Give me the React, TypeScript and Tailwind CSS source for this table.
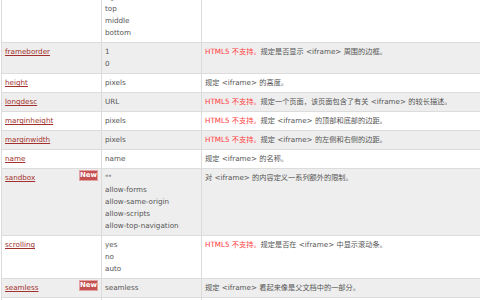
const rows = [
  {
    name: 'align',
    values: ['left', 'right', 'top', 'middle', 'bottom'],
    deprecated: true,
    desc: 'HTML 4.01 已废弃。根据周围的元素来对齐此元素。',
  },
  { name: 'frameborder', values: ['1', '0'], deprecated: true, desc: '规定是否显示 <iframe> 周围的边框。' },
  { name: 'height', values: ['pixels'], desc: '规定 <iframe> 的高度。' },
  { name: 'longdesc', values: ['URL'], deprecated: true, desc: '规定一个页面，该页面包含了有关 <iframe> 的较长描述。' },
  { name: 'marginheight', values: ['pixels'], deprecated: true, desc: '规定 <iframe> 的顶部和底部的边距。' },
  { name: 'marginwidth', values: ['pixels'], deprecated: true, desc: '规定 <iframe> 的左侧和右侧的边距。' },
  { name: 'name', values: ['name'], desc: '规定 <iframe> 的名称。' },
  {
    name: 'sandbox',
    isNew: true,
    values: ['""', 'allow-forms', 'allow-same-origin', 'allow-scripts', 'allow-top-navigation'],
    desc: '对 <iframe> 的内容定义一系列额外的限制。',
  },
  { name: 'scrolling', values: ['yes', 'no', 'auto'], deprecated: true, desc: '规定是否在 <iframe> 中显示滚动条。' },
  { name: 'seamless', isNew: true, values: ['seamless'], desc: '规定 <iframe> 看起来像是父文档中的一部分。' },
  { name: 'src', values: ['URL'], desc: '规定在 <iframe> 中显示的文档的 URL。' },
];

function NewBadge() {
  return (
    <span className="mt-[-2px] flex h-[11px] w-[19px] items-center justify-center border border-[#e3a3a3] bg-[#c4514f] text-[7px] leading-none font-bold text-white">
      New
    </span>
  );
}

export default function App() {
  return (
    <div className="h-[300px] w-[480px] overflow-hidden bg-white">
      <table
        className="mt-[-25px] ml-[1px] w-[520px] table-fixed border-collapse text-[7.2px] leading-[12px] text-[#555]"
        style={{ fontFamily: '"DejaVu Sans", Verdana, "Noto Sans CJK SC", sans-serif' }}
      >
        <colgroup>
          <col className="w-[100px]" />
          <col className="w-[100px]" />
          <col />
        </colgroup>
        <tbody>
          {rows.map((row, i) => (
            <tr key={row.name} className={i % 2 === 1 ? 'bg-[#eeeeee]' : 'bg-white'}>
              <td className="border border-[#dcdcdc] px-[3px] py-[3px] align-top">
                <div className="flex items-start justify-between">
                  <a href="#" className="text-[#a2302c] underline underline-offset-[1px]">
                    {row.name}
                  </a>
                  {row.isNew && <NewBadge />}
                </div>
              </td>
              <td className="border border-[#dcdcdc] px-[3px] py-[3px] align-top">
                {row.values.map(v => (
                  <div key={v}>{v}</div>
                ))}
              </td>
              <td className="border border-[#dcdcdc] px-[3px] py-[3px] align-top">
                {row.deprecated && <span className="text-[#ff3b3b]">HTML5 不支持。</span>}
                {row.desc}
              </td>
            </tr>
          ))}
        </tbody>
      </table>
    </div>
  );
}
